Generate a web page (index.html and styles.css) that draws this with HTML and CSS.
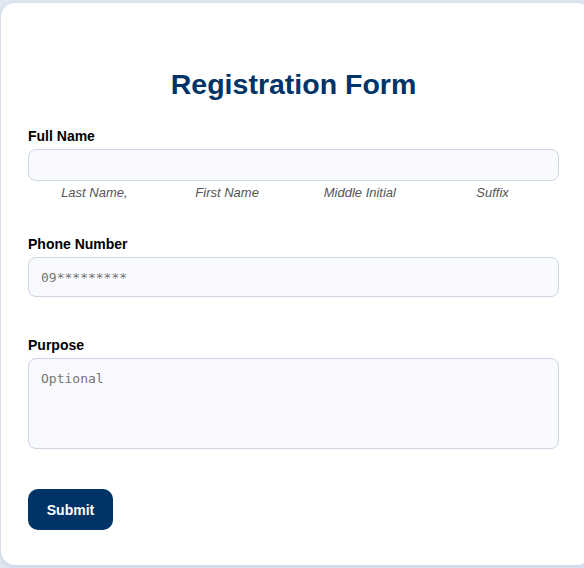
FILE: index.html
```html
<!DOCTYPE html>
<html lang="en">
<head>
<meta charset="utf-8">
<title>Registration Form</title>
<link rel="stylesheet" href="styles.css">
</head>
<body>
<main class="card">
  <h1 class="title">Registration Form</h1>
  <form class="form">
    <div class="field">
      <label class="label" for="fullname">Full Name</label>
      <input class="input input-short" id="fullname" type="text">
      <div class="hints">
        <span>Last Name,</span>
        <span>First Name</span>
        <span>Middle Initial</span>
        <span>Suffix</span>
      </div>
    </div>
    <div class="field field-phone">
      <label class="label" for="phone">Phone Number</label>
      <input class="input input-tall mono" id="phone" type="text" placeholder="09*********">
    </div>
    <div class="field field-purpose">
      <label class="label" for="purpose">Purpose</label>
      <textarea class="input textarea mono" id="purpose" placeholder="Optional"></textarea>
    </div>
    <div class="actions">
      <button class="btn" type="button">Submit</button>
    </div>
  </form>
</main>
</body>
</html>
```

FILE: styles.css
```css
html, body {
  margin: 0;
  padding: 0;
}
body {
  background: #dfe8f3;
  font-family: "Liberation Sans", Arial, sans-serif;
  height: 568px;
  overflow: hidden;
}
.card {
  box-sizing: border-box;
  margin: 3px 0 0 1px;
  width: 590px;
  height: 562px;
  background: #ffffff;
  border-radius: 14px;
  box-shadow: 0 2px 6px rgba(30, 60, 100, 0.12);
  padding: 65px 32px 0 27px;
}
.title {
  margin: 0;
  text-align: center;
  font-size: 28.5px;
  line-height: 33px;
  font-weight: bold;
  color: #003366;
  width: 531px;
}
.form {
  width: 531px;
  display: flex;
  flex-direction: column;
  margin-top: 27px;
}
.field {
  display: flex;
  flex-direction: column;
}
.field-phone {
  margin-top: 36px;
}
.field-purpose {
  margin-top: 40px;
}
.label {
  font-size: 14px;
  line-height: 16px;
  font-weight: bold;
  color: #000000;
  margin-bottom: 5px;
}
.input {
  box-sizing: border-box;
  width: 531px;
  border: 1px solid #cbd5e1;
  border-radius: 8px;
  background: #f8fafd;
  padding: 0 12px;
  margin: 0;
  outline: none;
}
.input-short {
  height: 32px;
}
.input-tall {
  height: 40px;
  padding-top: 1px;
}
.mono {
  font-family: "DejaVu Sans Mono", monospace;
  font-size: 13px;
  color: #333;
}
.mono::placeholder {
  color: #757575;
}
.textarea {
  height: 91px;
  padding: 12px 12px;
  resize: none;
  display: block;
}
.hints {
  display: grid;
  grid-template-columns: repeat(4, 1fr);
  margin-top: 4px;
  font-size: 13px;
  line-height: 15px;
  font-style: italic;
  color: #555555;
  text-align: center;
}
.actions {
  margin-top: 40px;
}
.btn {
  width: 85px;
  height: 41px;
  border: none;
  border-radius: 10px;
  background: #003366;
  color: #ffffff;
  font-family: "Liberation Sans", Arial, sans-serif;
  font-size: 14px;
  font-weight: bold;
  padding: 1px 0 0;
}
```
